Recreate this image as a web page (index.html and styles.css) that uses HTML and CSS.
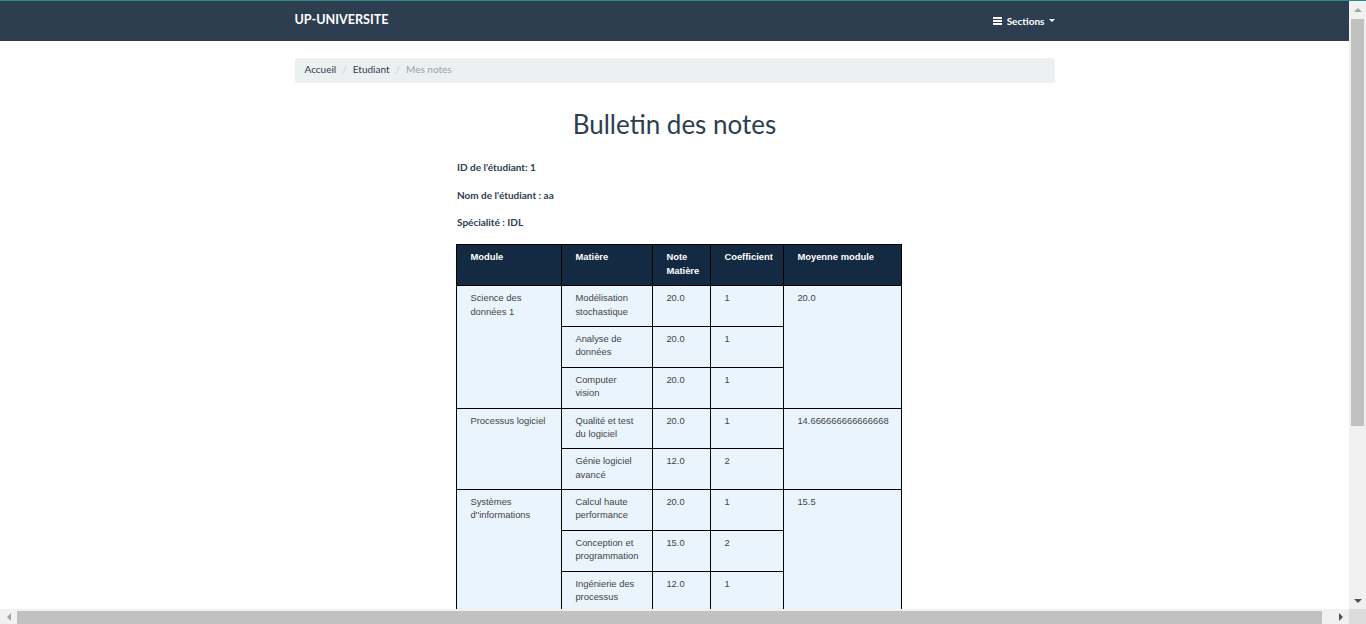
FILE: index.html
```html
<!DOCTYPE html>
<html lang="fr">
<head>
<meta charset="utf-8">
<title>Bulletin des notes</title>
<link rel="stylesheet" href="styles.css">
</head>
<body>
<div class="screen">
  <div class="topline"></div>
  <div class="viewport">
    <nav class="navbar">
      <div class="container nav-inner">
        <a class="brand" href="#">UP-UNIVERSITE</a>
        <a class="sections" href="#">
          <svg class="bars" width="9" height="8" viewBox="0 0 9 8"><rect x="0" y="0" width="9" height="2" fill="#fff"/><rect x="0" y="3" width="9" height="2" fill="#fff"/><rect x="0" y="6" width="9" height="2" fill="#fff"/></svg>
          <span>Sections</span>
          <span class="caret"></span>
        </a>
      </div>
    </nav>
    <main class="container">
      <ol class="breadcrumb">
        <li><a href="#">Accueil</a></li>
        <li class="sep">/</li>
        <li><a href="#">Etudiant</a></li>
        <li class="sep">/</li>
        <li class="active">Mes notes</li>
      </ol>
      <h1 class="title">Bulletin des notes</h1>
      <div class="content">
        <p class="info">ID de l'étudiant: 1</p>
        <p class="info">Nom de l'étudiant : aa</p>
        <p class="info">Spécialité : IDL</p>
        <table class="grades">
          <colgroup>
            <col class="c1"><col class="c2"><col class="c3"><col class="c4"><col class="c5">
          </colgroup>
          <thead>
            <tr><th>Module</th><th>Matière</th><th>Note Matière</th><th>Coefficient</th><th>Moyenne module</th></tr>
          </thead>
          <tbody>
            <tr><td rowspan="3">Science des données 1</td><td>Modélisation stochastique</td><td>20.0</td><td>1</td><td rowspan="3">20.0</td></tr>
            <tr><td>Analyse de données</td><td>20.0</td><td>1</td></tr>
            <tr><td>Computer vision</td><td>20.0</td><td>1</td></tr>
            <tr><td rowspan="2">Processus logiciel</td><td>Qualité et test du logiciel</td><td>20.0</td><td>1</td><td rowspan="2">14.666666666666668</td></tr>
            <tr><td>Génie logiciel avancé</td><td>12.0</td><td>2</td></tr>
            <tr><td rowspan="3">Systèmes d''informations</td><td>Calcul haute performance</td><td>20.0</td><td>1</td><td rowspan="3">15.5</td></tr>
            <tr><td>Conception et programmation</td><td>15.0</td><td>2</td></tr>
            <tr><td>Ingénierie des processus</td><td>12.0</td><td>1</td></tr>
          </tbody>
        </table>
      </div>
    </main>
  </div>
  <div class="vscroll">
    <div class="sb-btn"><span class="arr arr-up"></span></div>
    <div class="vtrack"><div class="vthumb"></div></div>
    <div class="sb-btn"><span class="arr arr-down"></span></div>
  </div>
  <div class="hscroll">
    <div class="sb-btn-h"><span class="arr arr-left"></span></div>
    <div class="htrack"><div class="hthumb"></div></div>
    <div class="sb-btn-h"><span class="arr arr-right"></span></div>
  </div>
  <div class="corner"></div>
</div>
</body>
</html>
```
FILE: styles.css
```css
html, body {
  margin: 0;
  padding: 0;
  overflow: hidden;
}
body {
  font-family: Lato, "Open Sans", sans-serif;
  font-size: 9.4px;
  color: #2c3e50;
  background: #fff;
}
a { text-decoration: none; }
.screen {
  display: grid;
  grid-template-columns: 1fr 17px;
  grid-template-rows: 1px 1fr 15px;
  width: 100vw;
  height: 100vh;
}
.topline {
  grid-column: 1 / 3;
  background: #2b8a86;
}
.viewport {
  overflow: hidden;
  min-width: 0;
  min-height: 0;
}
.container {
  width: 760px;
  margin: 0 auto;
}
.navbar {
  background: #2c3e50;
  height: 40px;
}
.nav-inner {
  display: flex;
  align-items: center;
  justify-content: space-between;
  height: 40px;
}
.brand {
  color: #fff;
  font-weight: 700;
  font-size: 12.6px;
  margin-top: -3px;
}
.sections {
  color: #fff;
  font-weight: 700;
  font-size: 10px;
  display: flex;
  align-items: center;
  margin-top: -1px;
}
.bars { margin-right: 5px; }
.caret {
  width: 0;
  height: 0;
  margin-left: 4px;
  border-left: 3px solid transparent;
  border-right: 3px solid transparent;
  border-top: 3px solid #fff;
}
.breadcrumb {
  list-style: none;
  margin: 17px 0 0;
  padding: 0 10px 3px;
  height: 22px;
  display: flex;
  align-items: center;
  background: #ecf0f1;
  border-radius: 3px;
  font-size: 10px;
}
.breadcrumb a { color: #2c3e50; }
.breadcrumb .sep { color: #c5cbcd; padding: 0 6px; }
.breadcrumb .active { color: #95a5a6; }
.title {
  margin: 26px 0 0;
  text-align: center;
  font-weight: 400;
  font-size: 26px;
  line-height: 30px;
}
.content {
  width: 445px;
  margin: 21px auto 0;
  padding-left: 8px;
}
.info {
  margin: 0 0 13.7px;
  padding-left: 1px;
  font-weight: 700;
  font-size: 10px;
  line-height: 14px;
}
.grades {
  margin-top: 15px;
  width: 445px;
  table-layout: fixed;
  border-collapse: collapse;
  font-family: "Liberation Sans", Arial, sans-serif;
  font-size: 9.4px;
  line-height: 13.3px;
}
.c1 { width: 105px; }
.c2 { width: 91px; }
.c3 { width: 58px; }
.c4 { width: 73px; }
.c5 { width: 118px; }
.grades th, .grades td {
  border: 1px solid #000;
  padding: 5.1px 13.4px 8.1px;
  text-align: left;
  vertical-align: top;
}
.grades th {
  background: #142a42;
  color: #fff;
  font-weight: 700;
}
.grades td {
  background: #eaf4fd;
  color: #444;
}
.vscroll {
  background: #f1f1f1;
  display: flex;
  flex-direction: column;
  min-height: 0;
}
.sb-btn {
  height: 17px;
  display: flex;
  align-items: center;
  justify-content: center;
}
.vtrack {
  flex: 1;
  padding: 1px 2px 0;
}
.vthumb {
  height: 407px;
  background: #c1c1c1;
}
.hscroll {
  background: #f1f1f1;
  display: flex;
}
.sb-btn-h {
  width: 17px;
  display: flex;
  align-items: center;
  justify-content: center;
}
.htrack {
  flex: 1;
  padding: 2px 0 0;
}
.hthumb {
  width: 1305px;
  height: 100%;
  background: #c1c1c1;
}
.corner {
  background: #dcdcdc;
}
.arr {
  width: 0;
  height: 0;
}
.arr-up {
  border-left: 4px solid transparent;
  border-right: 4px solid transparent;
  border-bottom: 4px solid #a3a3a3;
}
.arr-down {
  border-left: 4px solid transparent;
  border-right: 4px solid transparent;
  border-top: 4px solid #505050;
}
.arr-left {
  border-top: 4px solid transparent;
  border-bottom: 4px solid transparent;
  border-right: 4px solid #a3a3a3;
}
.arr-right {
  border-top: 4px solid transparent;
  border-bottom: 4px solid transparent;
  border-left: 4px solid #505050;
}
```
